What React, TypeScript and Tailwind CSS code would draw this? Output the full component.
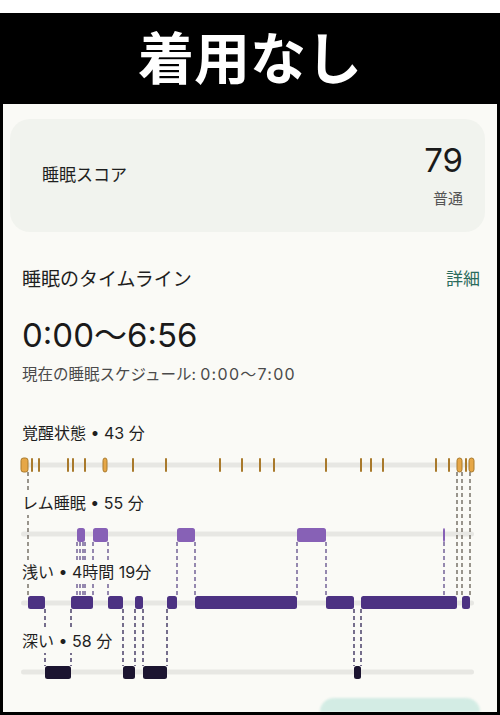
import React from "react";

// positions below are in page pixels; the chart svg shifts them into place
const awakeTicks = [32, 39, 68, 73, 85, 133, 166, 220, 242, 260, 274, 326, 361, 371, 383, 436, 449, 466];
const awakeBlocks: [number, number][] = [
  [21, 28],
  [103, 107],
  [457, 462],
  [469, 474],
];
const remBars: [number, number][] = [
  [77, 85],
  [93, 108],
  [177, 195],
  [297, 326],
  [443, 445],
];
const lightBars: [number, number][] = [
  [28, 45],
  [71, 93],
  [108, 123],
  [135, 143],
  [167, 177],
  [195, 297],
  [326, 354],
  [361, 457],
  [462, 470],
];
const deepBars: [number, number][] = [
  [45, 71],
  [123, 135],
  [143, 167],
  [354, 361],
];

const awakeLinks = [28, 457, 462, 470];
const remLinks = [77, 80, 83, 85, 93, 108, 177, 195, 297, 326, 444];
const deepLinks = [45, 71, 123, 135, 143, 167, 354, 361];

const tracks = [464, 533, 602, 671];

const StageLabel = ({ text, className }: { text: string; className: string }) => (
  <div className={`pl-[19px] h-[24px] ${className}`}>
    <span className="relative z-10 inline-block bg-[#fafaf6] pr-1 text-[16px] leading-[24px] text-[#1f1f1f]">
      {text}
    </span>
  </div>
);

const SleepChart = () => (
  <svg
    className="absolute inset-0 pointer-events-none"
    width={494}
    height={280}
    viewBox="0 0 494 280"
  >
    <g transform="translate(-3,-420)">
      {tracks.map((y) => (
        <rect key={y} x={21} y={y - 2.5} width={453} height={5} rx={2.5} fill="#e7e7e3" />
      ))}

      {/* connectors */}
      {awakeLinks.map((x) => (
        <line key={`a${x}`} x1={x} x2={x} y1={471} y2={595} stroke="#6f6a60" strokeWidth={1.4} strokeDasharray="4 3" />
      ))}
      {remLinks.map((x) => (
        <line key={`r${x}`} x1={x} x2={x} y1={541} y2={595} stroke="#6a5891" strokeWidth={1.4} strokeDasharray="4 3" />
      ))}
      {deepLinks.map((x) => (
        <line key={`d${x}`} x1={x} x2={x} y1={608} y2={665} stroke="#3e3360" strokeWidth={1.4} strokeDasharray="4 3" />
      ))}

      {/* awake */}
      {awakeTicks.map((x) => (
        <rect key={`t${x}`} x={x - 1} y={457} width={2} height={14} rx={1} fill="#a97a2c" />
      ))}
      {awakeBlocks.map(([a, b]) => (
        <rect
          key={`ab${a}`}
          x={a}
          y={457}
          width={b - a}
          height={14}
          rx={2.5}
          fill="#e6a747"
          stroke="#a97a2c"
          strokeWidth={1}
        />
      ))}

      {remBars.map(([a, b]) => (
        <rect key={`rb${a}`} x={a} y={527} width={b - a} height={14} rx={2.5} fill="#8761b6" />
      ))}
      {lightBars.map(([a, b]) => (
        <rect key={`lb${a}`} x={a} y={595} width={b - a} height={13} rx={2.5} fill="#4c3282" />
      ))}
      {deepBars.map(([a, b]) => (
        <rect key={`db${a}`} x={a} y={665} width={b - a} height={13} rx={2.5} fill="#1b1430" />
      ))}
    </g>
  </svg>
);

export default function App() {
  return (
    <div className="w-[500px] h-[715px] bg-white pt-[13px] font-[Inter,'Noto_Sans_CJK_JP',sans-serif]">
      <div className="h-[702px] bg-black px-[3px] pb-[3px] flex flex-col">
        {/*<--- Title band --->*/}
        <div className="h-[91px] pb-[7px] flex items-center justify-center text-white text-[56px] font-bold leading-none font-['Noto_Sans_CJK_JP',sans-serif]">
          着用なし
        </div>

        <div className="relative flex-1 bg-[#fafaf6] overflow-hidden">
          {/*<--- Score card --->*/}
          <div className="mt-[15px] ml-[7px] w-[475px] h-[113px] rounded-[20px] bg-[#f1f3ee] flex items-center justify-between pl-[32px] pr-[22px]">
            <span className="text-[17px] text-[#1f1f1f]">睡眠スコア</span>
            <div className="flex flex-col items-end">
              <span className="text-[33px] leading-[36px] text-[#1a1a1a]">79</span>
              <span className="mt-[11px] text-[15px] leading-[20px] text-[#555555]">普通</span>
            </div>
          </div>

          {/*<--- Timeline header --->*/}
          <div className="mt-[36px] h-[24px] flex items-center justify-between pl-[19px] pr-[17px]">
            <span className="text-[19px] text-[#1f1f1f]">睡眠のタイムライン</span>
            <span className="text-[17px] text-[#2a6b5c]">詳細</span>
          </div>

          <div className="mt-[23px] h-[40px] pl-[19px] text-[33px] leading-[40px] text-[#1a1a1a]">
            0:00〜6:56
          </div>
          <div className="mt-[9px] pl-[19px] text-[15.5px] leading-[20px] text-[#4a4a4a]">
            現在の睡眠スケジュール:{" "}
            <span className="text-[16px] tracking-[0.08em]">0:00〜7:00</span>
          </div>

          {/*<--- Stages chart --->*/}
          <div className="relative mt-[36px] h-[280px]">
            <SleepChart />
            <StageLabel text="覚醒状態 • 43 分" className="mt-[5px]" />
            <StageLabel text="レム睡眠 • 55 分" className="mt-[46px]" />
            <StageLabel text="浅い • 4時間 19分" className="mt-[45px]" />
            <StageLabel text="深い • 58 分" className="mt-[45px]" />
          </div>

          <div className="absolute bottom-0 left-[317px] w-[160px] h-[14px] rounded-t-[16px] bg-[#d3ece4] blur-[1px]" />
        </div>
      </div>
    </div>
  );
}
